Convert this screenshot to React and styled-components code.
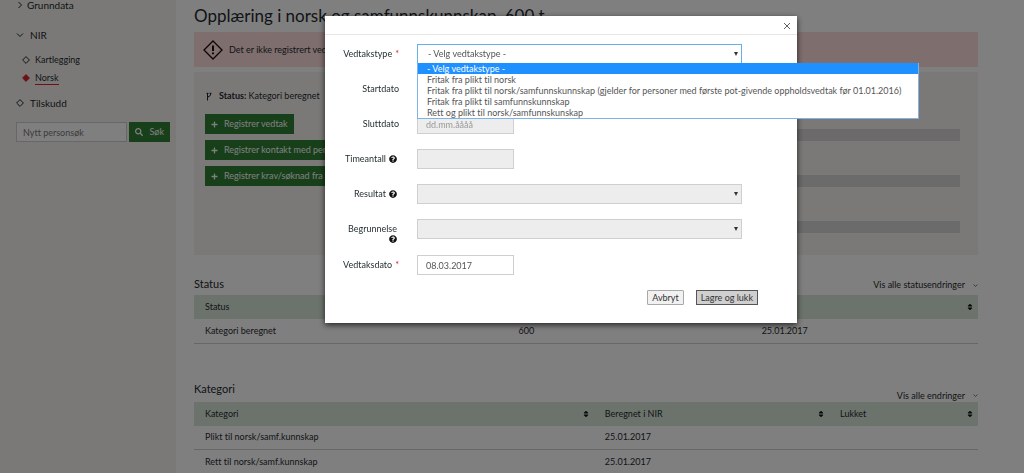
import React from 'react'
import styled, { createGlobalStyle } from 'styled-components'
import { FaPlus, FaQuestionCircle, FaSearch, FaSort } from 'react-icons/fa'

const colors = {
  text: '#1f2a2e',
  sand: '#f6f3ef',
  green: '#2f7f33',
  paleGreen: '#d9e6d9',
  pink: '#fedcdc',
  red: '#d8232a',
  bar: '#d6d6d6',
  line: '#cfcfcf',
}

const GlobalStyle = createGlobalStyle`
  * {
    box-sizing: border-box;
  }
  body {
    margin: 0;
    overflow: hidden;
    background: white;
    color: ${colors.text};
    font-family: Lato, 'Open Sans', sans-serif;
    font-size: 9px;
    font-variant-ligatures: none;
    line-height: 12px;
  }
  button, input, select {
    margin: 0;
    color: inherit;
    font: inherit;
  }
  a {
    color: inherit;
    text-decoration: none;
  }
  h1, h2, ul {
    margin: 0;
    padding: 0;
    font-weight: 400;
    list-style: none;
  }
`

const Page = styled.div`
  display: flex;
  height: 100vh;
  overflow: hidden;
`

const Sidebar = styled.aside`
  flex: none;
  width: 176px;
  padding: 0 6px 0 16px;
  background: ${colors.sand};
`

const NavLink = styled.a`
  display: flex;
  align-items: center;
  gap: ${(props) => (props.$sub ? 5 : 6)}px;
  height: ${(props) => (props.$sub ? 18 : 32)}px;
  padding-left: ${(props) => (props.$sub ? 6 : 0)}px;
  font-size: ${(props) => (props.$sub ? 9 : 10)}px;
`

const NavTop = styled(NavLink)`
  height: 10px;
  margin-bottom: 9px;
  gap: 3px;
  line-height: 10px;
`

const NavLabel = styled.span`
  border-bottom: 1px solid
    ${(props) => (props.$active ? colors.red : 'transparent')};
`

const SearchForm = styled.form`
  display: flex;
  gap: 2px;
  margin-top: 3px;
`

const SearchInput = styled.input`
  flex: 1;
  min-width: 0;
  height: 20px;
  padding: 0 6px;
  border: 1px solid ${colors.line};
  background: white;
  &::placeholder {
    color: #777;
  }
`

const GreenButton = styled.button`
  display: flex;
  align-items: center;
  gap: 6px;
  height: 20px;
  padding: 0 6px;
  border: 0;
  background: ${colors.green};
  color: white;
  white-space: nowrap;
`

const Main = styled.main`
  flex: 1;
  min-width: 0;
  padding: 5px 46px 0 18px;
`

const Title = styled.h1`
  margin-bottom: 5px;
  font-size: 17px;
  line-height: 22px;
`

const Alert = styled.div`
  display: flex;
  align-items: center;
  gap: 6px;
  height: 35px;
  margin-bottom: 5px;
  padding: 0 9px;
  background: ${colors.pink};
`

const Panel = styled.section`
  display: grid;
  grid-template-columns: 1fr 1fr;
  height: 183px;
  padding: 18px 18px 0 11px;
  background: ${colors.sand};
`

const Actions = styled.div`
  display: flex;
  flex-direction: column;
  align-items: flex-start;
  gap: 6px;
`

const StatusLine = styled.div`
  display: flex;
  align-items: center;
  gap: 6px;
  margin-bottom: 6px;
`

const Bars = styled.div`
  display: flex;
  flex-direction: column;
  gap: 34px;
  padding-top: 39px;
`

const Bar = styled.div`
  height: 12px;
  background: ${colors.bar};
`

const SectionHead = styled.div`
  display: flex;
  align-items: ${(props) => (props.$low ? 'flex-end' : 'center')};
  justify-content: space-between;
  height: ${(props) => (props.$low ? 22 : 20)}px;
  margin-top: ${(props) => (props.$low ? 36 : 20)}px;
`

const SectionTitle = styled.h2`
  align-self: flex-start;
  font-size: 11px;
  line-height: 18px;
`

const MoreLink = styled.a`
  display: flex;
  align-items: center;
  gap: 8px;
`

const Table = styled.table`
  width: 100%;
  border-collapse: collapse;
  table-layout: fixed;
`

const Th = styled.th`
  width: ${(props) => props.$width};
  height: 24px;
  padding: 0 4px 0 11px;
  background: ${colors.paleGreen};
  font-weight: 400;
  text-align: left;
`

const ThInner = styled.div`
  display: flex;
  align-items: center;
  justify-content: space-between;
`

const Td = styled.td`
  height: 24px;
  padding: 0 11px;
  border-bottom: 1px solid ${colors.line};
`

const Backdrop = styled.div`
  position: fixed;
  inset: 0;
  display: flex;
  align-items: flex-start;
  justify-content: center;
  padding: 16px 0 0 98px;
  background: rgba(0, 0, 0, 0.5);
`

const Dialog = styled.div`
  width: 472px;
  background: white;
  box-shadow: 0 2px 6px rgba(0, 0, 0, 0.7);
`

const DialogHeader = styled.div`
  display: flex;
  align-items: center;
  justify-content: flex-end;
  height: 19px;
  padding: 2px 6px 0;
  border-bottom: 1px solid #e8e8e8;
`

const CloseButton = styled.button`
  display: flex;
  padding: 0;
  border: 0;
  background: none;
  color: #666;
`

const DialogForm = styled.form`
  padding: 9px 39px 18px 12px;
`

const Row = styled.div`
  display: grid;
  grid-template-columns: 62px 1fr;
  column-gap: 18px;
  min-height: 35px;
  margin-bottom: ${(props) => (props.$tall ? 1 : 0)}px;
  padding-right: 16px;
`

const Label = styled.label`
  display: flex;
  flex-wrap: wrap;
  align-content: flex-start;
  align-items: center;
  justify-content: flex-end;
  column-gap: 3px;
  padding-top: 4px;
  padding-right: ${(props) => (props.$help ? 2 : 0)}px;
  padding-left: 4px;
`

const Required = styled.span`
  color: ${colors.red};
`

const SelectWrap = styled.div`
  position: relative;
  height: 20px;
`

const Select = styled.select`
  appearance: none;
  width: 100%;
  height: 20px;
  padding: 0 10px;
  border: 1px solid ${(props) => (props.$open ? '#66afe9' : colors.line)};
  border-radius: 0;
  background: ${(props) => (props.disabled ? '#ededed' : 'white')};
  color: #555;
  opacity: 1;
`

const Arrow = styled.svg`
  position: absolute;
  top: 8px;
  right: 4px;
`

const Menu = styled.ul`
  position: absolute;
  top: 19px;
  left: 0;
  z-index: 1;
  width: max-content;
  min-width: 502px;
  border: 1px solid #7fb3e6;
  border-top: 0;
  background: white;
`

const Option = styled.li`
  padding: 0 1px 0 9px;
  background: ${(props) => (props.$selected ? '#1e90ff' : 'white')};
  color: ${(props) => (props.$selected ? 'white' : '#555')};
  line-height: 11px;
`

const DateInput = styled.input`
  width: 97px;
  height: 20px;
  padding: 0 8px;
  border: 1px solid ${colors.line};
  background: ${(props) => (props.disabled ? '#ededed' : 'white')};
  color: #555;
  &::placeholder {
    color: #999;
  }
`

const Footer = styled.div`
  display: flex;
  justify-content: flex-end;
  gap: 12px;
`

const FooterButton = styled.button`
  height: 15px;
  padding: 0 4px;
  border: 1px solid ${(props) => (props.$primary ? '#555' : '#a9a9a9')};
  border-radius: ${(props) => (props.$primary ? 0 : 1)}px;
  background: ${(props) => (props.$primary ? '#cfcfcf' : '#f1f1f1')};
  color: #333;
  line-height: 12px;
`

const Chevron = ({ down, size = 8 }) => (
  <svg width={size} height={size} viewBox="0 0 8 8" fill="none" stroke="currentColor">
    <path d={down ? 'M1 2.5l3 3 3-3' : 'M2.5 1l3 3-3 3'} />
  </svg>
)

const Diamond = ({ filled }) => (
  <svg width="8" height="8" viewBox="0 0 8 8">
    <path
      d="M4 .6L7.4 4 4 7.4.6 4z"
      fill={filled ? colors.red : 'none'}
      stroke={filled ? colors.red : colors.text}
    />
  </svg>
)

const WarningIcon = () => (
  <svg width="20" height="20" viewBox="0 0 20 20" fill="none" stroke="#1a0a0a">
    <path d="M10 1l9 9-9 9-9-9z" strokeWidth="1.3" />
    <path d="M10 5.5v5.5M10 12.4v1.8" strokeWidth="2" />
  </svg>
)

const BranchIcon = () => (
  <svg width="8" height="9" viewBox="0 0 8 9" fill="none" stroke="currentColor">
    <path d="M2.5 1v7.5M5.5 1v2c0 1.5-3 1-3 3" />
    <path d="M1.5 1.3h2M4.5 1.3h2" />
  </svg>
)

const SelectArrow = () => (
  <Arrow width="4" height="4" viewBox="0 0 4 4">
    <path d="M0 0h4L2 4z" fill="#333" />
  </Arrow>
)

const vedtakstyper = [
  '- Velg vedtakstype -',
  'Fritak fra plikt til norsk',
  'Fritak fra plikt til norsk/samfunnskunnskap (gjelder for personer med første pot-givende oppholdsvedtak før 01.01.2016)',
  'Fritak fra plikt til samfunnskunnskap',
  'Rett og plikt til norsk/samfunnskunskap',
]

const actions = [
  'Registrer vedtak',
  'Registrer kontakt med person',
  'Registrer krav/søknad fra person',
]

const DataTable = ({ columns, rows }) => (
  <Table>
    <thead>
      <tr>
        {columns.map(([name, width]) => (
          <Th key={name} $width={width}>
            <ThInner>
              {name}
              <FaSort size={8} color="#111" />
            </ThInner>
          </Th>
        ))}
      </tr>
    </thead>
    <tbody>
      {rows.map((row) => (
        <tr key={row[0]}>
          {row.map((cell, i) => (
            <Td key={i}>{cell}</Td>
          ))}
        </tr>
      ))}
    </tbody>
  </Table>
)

const Field = ({ id, label, required, help, tall, children }) => (
  <Row $tall={tall}>
    <Label htmlFor={id} $help={help}>
      <span>{label}</span>
      {required && <Required>*</Required>}
      {help && <FaQuestionCircle size={8} color="#111" />}
    </Label>
    {children}
  </Row>
)

const VedtakDialog = () => (
  <Backdrop>
    <Dialog role="dialog" aria-modal="true" aria-label="Registrer vedtak">
      <DialogHeader>
        <CloseButton type="button" aria-label="Lukk">
          <svg width="8" height="8" viewBox="0 0 8 8" stroke="currentColor">
            <path d="M1 1l6 6M7 1L1 7" />
          </svg>
        </CloseButton>
      </DialogHeader>
      <DialogForm>
        <Field id="vedtakstype" label="Vedtakstype" required>
          <SelectWrap>
            <Select id="vedtakstype" $open>
              {vedtakstyper.map((type) => (
                <option key={type}>{type}</option>
              ))}
            </Select>
            <SelectArrow />
            <Menu role="listbox" aria-label="Vedtakstype">
              {vedtakstyper.map((type, i) => (
                <Option key={type} role="option" aria-selected={i === 0} $selected={i === 0}>
                  {type}
                </Option>
              ))}
            </Menu>
          </SelectWrap>
        </Field>
        <Field id="startdato" label="Startdato">
          <DateInput id="startdato" disabled />
        </Field>
        <Field id="sluttdato" label="Sluttdato">
          <DateInput id="sluttdato" placeholder="dd.mm.åååå" disabled />
        </Field>
        <Field id="timeantall" label="Timeantall" help>
          <DateInput id="timeantall" disabled />
        </Field>
        <Field id="resultat" label="Resultat" help>
          <SelectWrap>
            <Select id="resultat" disabled />
            <SelectArrow />
          </SelectWrap>
        </Field>
        <Field id="begrunnelse" label="Begrunnelse" help tall>
          <SelectWrap>
            <Select id="begrunnelse" disabled />
            <SelectArrow />
          </SelectWrap>
        </Field>
        <Field id="vedtaksdato" label="Vedtaksdato" required>
          <DateInput id="vedtaksdato" defaultValue="08.03.2017" />
        </Field>
        <Footer>
          <FooterButton type="button">Avbryt</FooterButton>
          <FooterButton type="submit" $primary>
            Lagre og lukk
          </FooterButton>
        </Footer>
      </DialogForm>
    </Dialog>
  </Backdrop>
)

const App = () => {
  return (
    <>
      <GlobalStyle />
      <Page>
        <Sidebar>
          <nav>
            <NavTop href="#grunndata">
              <Chevron />
              Grunndata
            </NavTop>
            <NavLink href="#nir">
              <Chevron down />
              NIR
            </NavLink>
            <NavLink href="#kartlegging" $sub>
              <Diamond />
              <NavLabel>Kartlegging</NavLabel>
            </NavLink>
            <NavLink href="#norsk" $sub>
              <Diamond filled />
              <NavLabel $active>Norsk</NavLabel>
            </NavLink>
            <NavLink href="#tilskudd">
              <Diamond />
              Tilskudd
            </NavLink>
          </nav>
          <SearchForm>
            <SearchInput aria-label="Nytt personsøk" placeholder="Nytt personsøk" />
            <GreenButton type="submit">
              <FaSearch size={8} />
              Søk
            </GreenButton>
          </SearchForm>
        </Sidebar>
        <Main>
          <Title>Opplæring i norsk og samfunnskunnskap, 600 t</Title>
          <Alert>
            <WarningIcon />
            Det er ikke registrert vedtak
          </Alert>
          <Panel>
            <Actions>
              <StatusLine>
                <BranchIcon />
                <span>
                  <b>Status:</b> Kategori beregnet
                </span>
              </StatusLine>
              {actions.map((action) => (
                <GreenButton key={action}>
                  <FaPlus size={7} />
                  {action}
                </GreenButton>
              ))}
            </Actions>
            <Bars>
              <Bar />
              <Bar />
              <Bar />
            </Bars>
          </Panel>
          <SectionHead>
            <SectionTitle>Status</SectionTitle>
            <MoreLink href="#statusendringer">
              Vis alle statusendringer
              <Chevron down size={5} />
            </MoreLink>
          </SectionHead>
          <DataTable
            columns={[
              ['Status', '40%'],
              ['Timer', '31%'],
              ['Dato', '29%'],
            ]}
            rows={[['Kategori beregnet', '600', '25.01.2017']]}
          />
          <SectionHead $low>
            <SectionTitle>Kategori</SectionTitle>
            <MoreLink href="#endringer">
              Vis alle endringer
              <Chevron down size={5} />
            </MoreLink>
          </SectionHead>
          <DataTable
            columns={[
              ['Kategori', '51%'],
              ['Beregnet i NIR', '30%'],
              ['Lukket', '19%'],
            ]}
            rows={[
              ['Plikt til norsk/samf.kunnskap', '25.01.2017', ''],
              ['Rett til norsk/samf.kunnskap', '25.01.2017', ''],
            ]}
          />
        </Main>
      </Page>
      <VedtakDialog />
    </>
  )
}

export default App
